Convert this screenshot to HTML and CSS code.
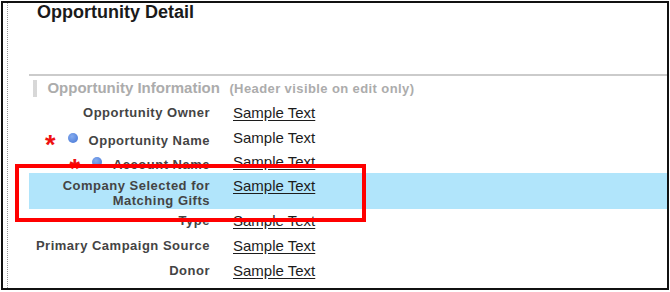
FILE: index.html
```html
<!DOCTYPE html>
<html lang="en">
<head>
  <meta charset="UTF-8" />
  <meta name="viewport" content="width=device-width, initial-scale=1.0"/>
  <title>Opportunity Detail</title>
  <link rel="stylesheet" href="styles.css">
</head>
<body>
  <div class="frame">
    <div class="page">
      <h1 class="title">Opportunity Detail</h1>

      <div class="section">
        <div class="section-head">
          <span class="handle"></span>
          <span class="head-text">Opportunity Information</span>
          <span class="head-note">(Header visible on edit only)</span>
        </div>

        <div class="row">
          <div class="label">Opportunity Owner</div>
          <div class="value link">Sample Text</div>
        </div>
        <div class="row">
          <div class="label req"><span class="star">*</span><span class="dot"></span>Opportunity Name</div>
          <div class="value">Sample Text</div>
        </div>
        <div class="row short">
          <div class="label req"><span class="star">*</span><span class="dot"></span>Account Name</div>
          <div class="value link">Sample Text</div>
        </div>
        <div class="row tall selected">
          <div class="label">Company Selected for Matching Gifts</div>
          <div class="value link">Sample Text</div>
        </div>
        <div class="row type">
          <div class="label">Type</div>
          <div class="value link">Sample Text</div>
        </div>
        <div class="row">
          <div class="label">Primary Campaign Source</div>
          <div class="value link">Sample Text</div>
        </div>
        <div class="row">
          <div class="label">Donor</div>
          <div class="value link">Sample Text</div>
        </div>
      </div>
    </div>

    <div class="highlight-box"></div>
  </div>
</body>
</html>
```

FILE: styles.css
```css
body {
  margin: 0;
  font-family: "Liberation Sans", Arial, sans-serif;
  background: #fff;
}
.frame {
  position: relative;
  box-sizing: border-box;
  width: 668px;
  height: 289px;
  margin: 1px;
  border: 2px solid #111;
  overflow: hidden;
}
.page {
  height: 100%;
  margin-left: 4px;
  border-left: 1px dotted #9a9a9a;
}
.title {
  margin: 0;
  padding-left: 29px;
  font-size: 18px;
  line-height: 18px;
  font-weight: bold;
  color: #1a1a1a;
}
.section {
  margin: 53px 0 0 21px;
  border-top: 2px solid #cbcbcb;
}
.section-head {
  height: 24px;
  line-height: 24px;
  padding-left: 4px;
  white-space: nowrap;
}
.handle {
  display: inline-block;
  width: 4px;
  height: 17px;
  margin-right: 6px;
  vertical-align: -4px;
  background-image: radial-gradient(circle at 1px 1px, #808080 0.5px, transparent 0.8px);
  background-size: 2px 2px;
}
.head-text {
  font-size: 15px;
  font-weight: bold;
  color: #acacac;
}
.head-note {
  margin-left: 5px;
  font-size: 13px;
  font-weight: bold;
  letter-spacing: 0.4px;
  color: #acacac;
}
.row {
  display: grid;
  grid-template-columns: 181px 1fr;
  column-gap: 23px;
  box-sizing: border-box;
  height: 25px;
  padding-top: 5px;
  line-height: 15px;
}
.row.short {
  height: 23px;
  padding-top: 4px;
}
.row.tall {
  height: 36px;
  padding-top: 5px;
}
.row.type {
  height: 24px;
  padding-top: 4px;
}
.row.selected {
  background: #b1e5fb;
}
.label {
  text-align: right;
  font-size: 13px;
  font-weight: bold;
  letter-spacing: 0.5px;
  color: #444;
}
.label.req {
  padding-top: 3px;
  white-space: nowrap;
}
.star {
  display: inline-block;
  margin-right: 12px;
  font-size: 27px;
  font-weight: bold;
  line-height: 0;
  color: #ee1111;
  vertical-align: -9px;
  letter-spacing: 0;
}
.dot {
  display: inline-block;
  width: 10px;
  height: 10px;
  margin-right: 11px;
  border-radius: 50%;
  background: radial-gradient(circle at 40% 35%, #86acef, #4273d4);
  vertical-align: 2px;
}
.value {
  font-size: 15px;
  color: #1c1c1c;
  white-space: nowrap;
}
.value.link {
  text-decoration: underline;
  text-underline-offset: 2px;
}
.highlight-box {
  position: absolute;
  left: 12px;
  top: 161px;
  width: 351px;
  height: 58px;
  box-sizing: border-box;
  border: 4px solid #ff0000;
}
```
